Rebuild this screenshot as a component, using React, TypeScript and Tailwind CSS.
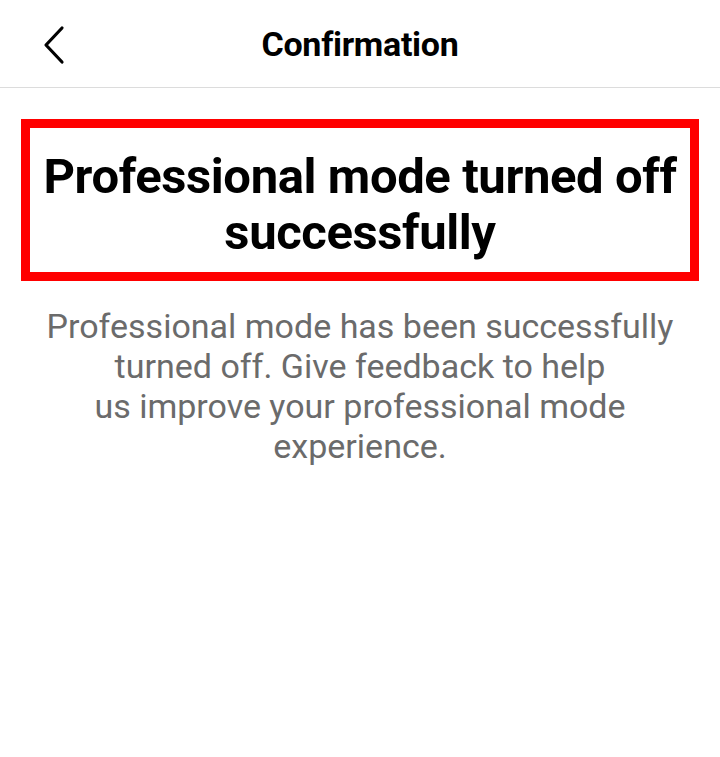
export default function App() {
  return (
    <div className="min-h-screen w-full bg-white text-black font-['Roboto',sans-serif]">
      <header className="relative h-[88px] border-b border-[#dcdcdc] flex items-center justify-center">
        <button className="absolute left-[36px] top-[25px] text-black">
          <svg width="32" height="40" viewBox="0 0 32 40" fill="none" stroke="currentColor" strokeWidth="3.2" strokeLinecap="round" strokeLinejoin="round">
            <path d="M26 3 L10 20 L26 37" />
          </svg>
        </button>
        <h1 className="text-[34px] font-bold tracking-[-0.3px] pt-[2px]">Confirmation</h1>
      </header>
      <main className="px-[21px] pt-[31px]">
        <div className="border-[9px] border-[#ff0000] h-[162px] flex items-center justify-center">
          <h2 className="pt-[10px] text-[49px] leading-[56px] font-bold text-center tracking-[-0.4px]">
            Professional mode turned off
            <br />
            successfully
          </h2>
        </div>
        <p className="mt-[25px] text-[34px] leading-[40px] text-center text-[#6b6b6b]">
          Professional mode has been successfully
          <br />
          turned off. Give feedback to help
          <br />
          us improve your professional mode
          <br />
          experience.
        </p>
      </main>
    </div>
  )
}
